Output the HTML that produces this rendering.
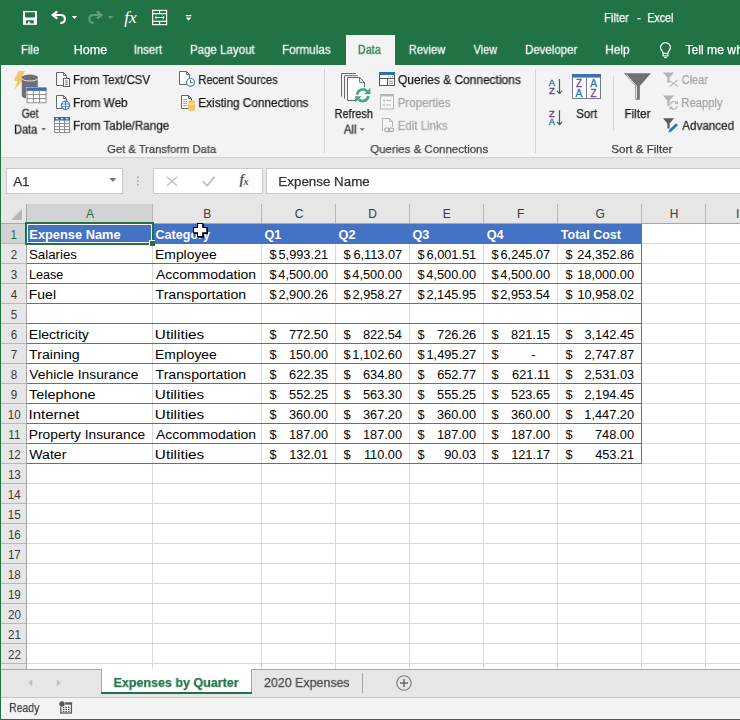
<!DOCTYPE html>
<html lang="en">
<head>
<meta charset="utf-8">
<title>Filter - Excel</title>
<style>
html,body{margin:0;padding:0;}
body{width:740px;height:720px;overflow:hidden;position:relative;background:#fff;font-family:"Liberation Sans",sans-serif;}
#app{position:absolute;left:0;top:0;width:740px;height:720px;overflow:hidden;background:#e6e6e6;}
.abs,.t,#app div,#app svg{position:absolute;}
.t{white-space:pre;display:block;}
.g{will-change:transform;-webkit-text-stroke:0.25px;}
#titlebar{left:0;top:0;width:740px;height:65px;background:#217346;}
#tab-data{left:346px;top:35px;width:49px;height:31px;background:#f3f3f3;}
#ribbon{left:1px;top:65px;width:739px;height:92px;background:#f3f3f3;}
#ribbon-line{left:1px;top:157px;width:739px;height:1px;background:#d2d2d2;}
.vsep{width:1px;background:#d4d4d4;}
.box{background:#fff;border:1px solid #c9c9c9;box-sizing:border-box;}
#sheet{left:1px;top:204px;width:739px;height:465px;background:#fff;}
#colhdr{left:1px;top:204px;width:739px;height:19px;background:#e6e6e6;}
#rowhdr{left:1px;top:204px;width:25px;height:465px;background:#e6e6e6;}
.hl{height:1px;background:#d9d9d9;}
.vl{width:1px;background:#d9d9d9;}
.hh{height:1px;background:#bdbdbd;}
.hv{width:1px;background:#bdbdbd;}
.bl{background:#4472c4;}
#tabbar{left:1px;top:669px;width:739px;height:29px;background:#e6e6e6;}
#statusbar{left:1px;top:698px;width:739px;height:21px;background:#f3f3f3;}
#lborder{left:0;top:0;width:1px;height:720px;background:#217346;}
#bborder{left:0;top:719px;width:740px;height:1px;background:#217346;}
</style>
</head>
<body>
<div id="app">
  <div id="titlebar"></div>
  <div id="tab-data"></div>
  <div id="ribbon"></div>
  <div id="ribbon-line"></div>
  <div class="vsep" style="left:324px;top:69px;height:84px"></div>
  <div class="vsep" style="left:535px;top:69px;height:84px"></div>
  <div class="vsep" style="left:613px;top:76px;height:55px"></div>
  <!-- formula bar -->
  <div class="box" style="left:6px;top:168px;width:117px;height:26px"></div>
  <div class="box" style="left:153px;top:168px;width:110px;height:26px"></div>
  <div class="box" style="left:266px;top:168px;width:480px;height:26px"></div>
  <!-- sheet -->
  <div id="sheet"></div>
  <div id="colhdr"></div>
  <div id="rowhdr"></div>
  <div style="left:27px;top:204px;width:125px;height:19px;background:#d2d2d2;"></div>
<div style="left:1px;top:224px;width:25px;height:19px;background:#d2d2d2;"></div>
<div style="left:27px;top:243px;width:713px;height:1px;background:#d9d9d9;"></div>
<div style="left:1px;top:243px;width:25px;height:1px;background:#b8b8b8;"></div>
<div style="left:27px;top:263px;width:713px;height:1px;background:#d9d9d9;"></div>
<div style="left:1px;top:263px;width:25px;height:1px;background:#b8b8b8;"></div>
<div style="left:27px;top:283px;width:713px;height:1px;background:#d9d9d9;"></div>
<div style="left:1px;top:283px;width:25px;height:1px;background:#b8b8b8;"></div>
<div style="left:27px;top:303px;width:713px;height:1px;background:#d9d9d9;"></div>
<div style="left:1px;top:303px;width:25px;height:1px;background:#b8b8b8;"></div>
<div style="left:27px;top:323px;width:713px;height:1px;background:#d9d9d9;"></div>
<div style="left:1px;top:323px;width:25px;height:1px;background:#b8b8b8;"></div>
<div style="left:27px;top:343px;width:713px;height:1px;background:#d9d9d9;"></div>
<div style="left:1px;top:343px;width:25px;height:1px;background:#b8b8b8;"></div>
<div style="left:27px;top:363px;width:713px;height:1px;background:#d9d9d9;"></div>
<div style="left:1px;top:363px;width:25px;height:1px;background:#b8b8b8;"></div>
<div style="left:27px;top:383px;width:713px;height:1px;background:#d9d9d9;"></div>
<div style="left:1px;top:383px;width:25px;height:1px;background:#b8b8b8;"></div>
<div style="left:27px;top:403px;width:713px;height:1px;background:#d9d9d9;"></div>
<div style="left:1px;top:403px;width:25px;height:1px;background:#b8b8b8;"></div>
<div style="left:27px;top:423px;width:713px;height:1px;background:#d9d9d9;"></div>
<div style="left:1px;top:423px;width:25px;height:1px;background:#b8b8b8;"></div>
<div style="left:27px;top:443px;width:713px;height:1px;background:#d9d9d9;"></div>
<div style="left:1px;top:443px;width:25px;height:1px;background:#b8b8b8;"></div>
<div style="left:27px;top:463px;width:713px;height:1px;background:#d9d9d9;"></div>
<div style="left:1px;top:463px;width:25px;height:1px;background:#b8b8b8;"></div>
<div style="left:27px;top:483px;width:713px;height:1px;background:#d9d9d9;"></div>
<div style="left:1px;top:483px;width:25px;height:1px;background:#b8b8b8;"></div>
<div style="left:27px;top:503px;width:713px;height:1px;background:#d9d9d9;"></div>
<div style="left:1px;top:503px;width:25px;height:1px;background:#b8b8b8;"></div>
<div style="left:27px;top:523px;width:713px;height:1px;background:#d9d9d9;"></div>
<div style="left:1px;top:523px;width:25px;height:1px;background:#b8b8b8;"></div>
<div style="left:27px;top:543px;width:713px;height:1px;background:#d9d9d9;"></div>
<div style="left:1px;top:543px;width:25px;height:1px;background:#b8b8b8;"></div>
<div style="left:27px;top:563px;width:713px;height:1px;background:#d9d9d9;"></div>
<div style="left:1px;top:563px;width:25px;height:1px;background:#b8b8b8;"></div>
<div style="left:27px;top:583px;width:713px;height:1px;background:#d9d9d9;"></div>
<div style="left:1px;top:583px;width:25px;height:1px;background:#b8b8b8;"></div>
<div style="left:27px;top:603px;width:713px;height:1px;background:#d9d9d9;"></div>
<div style="left:1px;top:603px;width:25px;height:1px;background:#b8b8b8;"></div>
<div style="left:27px;top:623px;width:713px;height:1px;background:#d9d9d9;"></div>
<div style="left:1px;top:623px;width:25px;height:1px;background:#b8b8b8;"></div>
<div style="left:27px;top:643px;width:713px;height:1px;background:#d9d9d9;"></div>
<div style="left:1px;top:643px;width:25px;height:1px;background:#b8b8b8;"></div>
<div style="left:27px;top:663px;width:713px;height:1px;background:#d9d9d9;"></div>
<div style="left:1px;top:663px;width:25px;height:1px;background:#b8b8b8;"></div>
<div style="left:152px;top:224px;width:1px;height:445px;background:#d9d9d9;"></div>
<div style="left:152px;top:204px;width:1px;height:19px;background:#b8b8b8;"></div>
<div style="left:261px;top:224px;width:1px;height:445px;background:#d9d9d9;"></div>
<div style="left:261px;top:204px;width:1px;height:19px;background:#b8b8b8;"></div>
<div style="left:335px;top:224px;width:1px;height:445px;background:#d9d9d9;"></div>
<div style="left:335px;top:204px;width:1px;height:19px;background:#b8b8b8;"></div>
<div style="left:409px;top:224px;width:1px;height:445px;background:#d9d9d9;"></div>
<div style="left:409px;top:204px;width:1px;height:19px;background:#b8b8b8;"></div>
<div style="left:483px;top:224px;width:1px;height:445px;background:#d9d9d9;"></div>
<div style="left:483px;top:204px;width:1px;height:19px;background:#b8b8b8;"></div>
<div style="left:557px;top:224px;width:1px;height:445px;background:#d9d9d9;"></div>
<div style="left:557px;top:204px;width:1px;height:19px;background:#b8b8b8;"></div>
<div style="left:641px;top:224px;width:1px;height:445px;background:#d9d9d9;"></div>
<div style="left:641px;top:204px;width:1px;height:19px;background:#b8b8b8;"></div>
<div style="left:705px;top:224px;width:1px;height:445px;background:#d9d9d9;"></div>
<div style="left:705px;top:204px;width:1px;height:19px;background:#b8b8b8;"></div>
<div style="left:1px;top:223px;width:739px;height:1px;background:#a6a6a6;"></div>
<div style="left:26px;top:204px;width:1px;height:465px;background:#a6a6a6;"></div>
<div style="left:27px;top:224px;width:615px;height:20px;background:#4472c4;"></div>
<div style="left:27px;top:263px;width:615px;height:1px;background:#4472c4;"></div>
<div style="left:27px;top:283px;width:615px;height:1px;background:#4472c4;"></div>
<div style="left:27px;top:303px;width:615px;height:1px;background:#4472c4;"></div>
<div style="left:27px;top:323px;width:615px;height:1px;background:#4472c4;"></div>
<div style="left:27px;top:343px;width:615px;height:1px;background:#4472c4;"></div>
<div style="left:27px;top:363px;width:615px;height:1px;background:#4472c4;"></div>
<div style="left:27px;top:383px;width:615px;height:1px;background:#4472c4;"></div>
<div style="left:27px;top:403px;width:615px;height:1px;background:#4472c4;"></div>
<div style="left:27px;top:423px;width:615px;height:1px;background:#4472c4;"></div>
<div style="left:27px;top:443px;width:615px;height:1px;background:#4472c4;"></div>
<div style="left:27px;top:463px;width:615px;height:1px;background:#4472c4;"></div>
<div style="left:641px;top:224px;width:1px;height:240px;background:#4472c4;"></div>
<div style="left:25px;top:222px;width:129px;height:23px;background:transparent;border:2px solid #217346;box-sizing:border-box;"></div>
<div style="left:27px;top:224px;width:125px;height:19px;background:transparent;border:1px solid #fff;box-sizing:border-box;"></div>
<div style="left:149px;top:240px;width:6px;height:6px;background:#fff;"></div>
<div style="left:150px;top:241px;width:5px;height:5px;background:#217346;"></div>
<svg style="left:10px;top:208px" width="13" height="13" viewBox="0 0 13 13"><path d="M12 1V12H1Z" fill="#b7b7b7"/></svg>

  <div id="tabbar"></div>
  <div id="statusbar"></div>
  
<div style="left:1px;top:669px;width:739px;height:1px;background:#a6a6a6;"></div>
<div style="left:101px;top:669px;width:151px;height:24px;background:#ffffff;border-left:1px solid #a6a6a6;border-right:1px solid #a6a6a6;box-sizing:border-box;"></div>
<div style="left:101px;top:692px;width:151px;height:2px;background:#217346;"></div>
<div style="left:362px;top:673px;width:1px;height:20px;background:#a6a6a6;"></div>
<div style="left:1px;top:697px;width:739px;height:1px;background:#c6c6c6;"></div>
  <svg style="left:0;top:0" width="740" height="720" viewBox="0 0 740 720" font-family="Liberation Sans, sans-serif">
<!-- ===== QAT ===== -->
<rect x="23" y="11" width="14" height="13.8" fill="#fff"/>
<path d="M25 12.3H35V16.4L34 17.5H26L25 16.4Z" fill="#217346"/>
<path d="M26 20.2H33.7V23.5H30.2V21.7H28V23.5H26Z" fill="#217346"/>
<g fill="none" stroke="#fff">
  <path d="M57.2 11.3L52.8 15L57.2 18.7" stroke-width="2.4"/>
  <path d="M53.6 15H60.4C63.6 15 64.9 17 64.9 19C64.9 21.4 63 22.9 60.4 22.9" stroke-width="2.1"/>
</g>
<path d="M71.9 16.1H77.1L74.5 19Z" fill="#fff"/>
<g fill="none" stroke="#5f9f80">
  <path d="M97 11.3L101.4 15L97 18.7" stroke-width="2.4"/>
  <path d="M100.6 15H93.8C90.6 15 89.3 17 89.3 19C89.3 21.4 91.2 22.9 93.8 22.9" stroke-width="2.1"/>
</g>
<path d="M107.9 16.1H113.1L110.5 19Z" fill="#5f9f80"/>
<text x="124.2" y="23" font-family="Liberation Serif, serif" font-style="italic" font-size="17" fill="#fff" textLength="12.5" lengthAdjust="spacingAndGlyphs">fx</text>
<g fill="none" stroke="#fff" stroke-width="1.2">
  <rect x="152.6" y="10.4" width="14" height="14.2"/>
  <path d="M152.6 13.6H166.6M152.6 21.4H166.6M159.6 10.4V13.6M159.6 21.4V24.6"/>
  <path d="M155 17.5H164.2M156.6 16L155 17.5L156.6 19M162.6 16L164.2 17.5L162.6 19" stroke-width="1"/>
</g>
<path d="M185.8 15H191.4V16.2H185.8ZM185.8 17.6H191.4L188.6 20.8Z" fill="#fff"/>
<!-- lightbulb -->
<g fill="none" stroke="#fff" stroke-width="1.3">
  <path d="M663.1 53.4C663.1 51 660.5 50.2 660.5 47.6A4.95 4.95 0 1 1 670.4 47.6C670.4 50.2 667.9 51 667.9 53.4"/>
  <rect x="663.1" y="53.4" width="4.8" height="2.5" stroke-width="1.1"/>
  <path d="M664.2 57.6H666.9" stroke-width="1.1"/>
</g>

<!-- ===== Get Data ===== -->
<path d="M18.4 71H25L21.6 78.4L24 79.2L14 90L17.8 81.6L14 80.4Z" fill="#f2c565"/>
<path d="M21.8 77.3V96A8 2.7 0 0 0 37.8 96V77.3Z" fill="#707074"/>
<ellipse cx="29.8" cy="77.3" rx="8" ry="2.7" fill="#707074"/>
<path d="M21.8 78.3A8 2.7 0 0 0 37.8 78.3" fill="none" stroke="#f3f3f3" stroke-width="0.9"/>
<rect x="26" y="87" width="20.8" height="16.6" fill="#fdfdfd"/>
<rect x="27" y="88" width="19" height="14.8" fill="#fff" stroke="#8a8a8a" stroke-width="1"/>
<rect x="26.5" y="87.6" width="19.9" height="3.3" fill="#3d6fb6"/>
<path d="M33.4 91V102.8M39.6 91V102.8M27 94.6H46M27 98.6H46" stroke="#8a8a8a" stroke-width="1" fill="none"/>
<path d="M41.3 128H46L43.65 130.6Z" fill="#707070"/>
<!-- From Text/CSV -->
<g fill="#fdfdfd" stroke="#666" stroke-width="1">
  <path d="M56.5 72.5H63.5L66.5 75.5V85.5H56.5Z"/>
  <path d="M63.5 72.5V75.5H66.5" fill="none"/>
  <rect x="63.5" y="78.5" width="6" height="8"/>
  <path d="M65 81H68M65 82.8H68M65 84.6H68" stroke-width="0.8"/>
</g>
<!-- From Web -->
<g fill="#fdfdfd" stroke="#666" stroke-width="1">
  <path d="M56.5 95.5H63.5L66.5 98.5V108.5H56.5Z"/>
  <path d="M63.5 95.5V98.5H66.5" fill="none"/>
</g>
<circle cx="65.5" cy="105.3" r="4.1" fill="#fff" stroke="#3b7dd8" stroke-width="1.3"/>
<path d="M61.6 104H69.4M61.6 106.6H69.4M65.5 101.4V109.2" stroke="#3b7dd8" stroke-width="0.9" fill="none"/>
<!-- From Table/Range -->
<rect x="54.5" y="117.5" width="15" height="15" fill="#fff" stroke="#8a8a8a"/>
<rect x="54" y="117" width="16" height="3.6" fill="#3d6fb6"/>
<path d="M56 118.8H58M61 118.8H63M66 118.8H68" stroke="#fff" stroke-width="1"/>
<path d="M59.5 120.6V132.5M64.5 120.6V132.5M54.5 123.6H69.5M54.5 126.6H69.5M54.5 129.6H69.5" stroke="#8a8a8a" stroke-width="1" fill="none"/>
<!-- Recent Sources -->
<g fill="#fdfdfd" stroke="#666" stroke-width="1">
  <path d="M179.5 71.5H186.5L189.5 74.5V84.5H179.5Z"/>
  <path d="M186.5 71.5V74.5H189.5" fill="none"/>
</g>
<circle cx="190.5" cy="82.4" r="3.9" fill="#fff" stroke="#3b7dd8" stroke-width="1.2"/>
<path d="M190.5 80V82.6H192.6" stroke="#444" stroke-width="0.9" fill="none"/>
<!-- Existing Connections -->
<g fill="#fdfdfd" stroke="#666" stroke-width="1">
  <path d="M181.5 95.5H188.5L191.5 98.5V108.5H181.5Z"/>
  <path d="M188.5 95.5V98.5H191.5" fill="none"/>
  <path d="M183.2 99.6H187M183.2 101.6H187M183.2 103.6H187M183.2 105.6H187" stroke-width="0.8" stroke="#888"/>
</g>
<path d="M188 101.8V109.4A3.6 1.4 0 0 0 195.2 109.4V101.8Z" fill="#f2c565"/>
<ellipse cx="191.6" cy="101.8" rx="3.6" ry="1.4" fill="#f2c565"/>
<path d="M188 102.9A3.6 1.4 0 0 0 195.2 102.9" fill="none" stroke="#fdf6e4" stroke-width="0.8"/>

<!-- ===== Refresh All ===== -->
<g fill="none" stroke="#6a6a72" stroke-width="1">
  <path d="M341.5 96.5V73.5H356"/>
  <path d="M344.5 98.8V75.7H357.8"/>
  <path d="M347.5 77.5H359.6L364.5 82.4V100.5H347.5Z" fill="#fdfdfd"/>
  <path d="M359.6 77.5V82.4H364.5"/>
</g>
<circle cx="362.8" cy="95.2" r="8.2" fill="#fdfdfd"/>
<g fill="none" stroke="#4aa583" stroke-width="2.8">
  <path d="M357.3 94.6A5.6 5.6 0 0 1 367 91.2"/>
  <path d="M368.3 95.8A5.6 5.6 0 0 1 358.6 99.2"/>
</g>
<path d="M370.4 87.8V94.2H364Z" fill="#4aa583"/>
<path d="M355.2 102.6V96.2H361.6Z" fill="#4aa583"/>
<path d="M359.6 128.2H364.6L362.1 130.8Z" fill="#666"/>
<!-- Queries & Connections icon -->
<rect x="379.5" y="72.5" width="15" height="13" fill="#fdfdfd" stroke="#555"/>
<rect x="379" y="72" width="16" height="3" fill="#2e6db4"/>
<path d="M379.5 78.5H394.5M387.5 78.5V85.5" stroke="#555" fill="none"/>
<path d="M389 81.2H393M389 83.2H393" stroke="#777" stroke-width="0.8"/>
<path d="M388 76.8H389M390 76.8H391M392 76.8H393" stroke="#777" stroke-width="0.8"/>
<!-- Properties icon (disabled) -->
<rect x="380.5" y="94.5" width="13" height="14.5" fill="#f7f7f7" stroke="#b4b4b4"/>
<rect x="380" y="94" width="14" height="2.4" fill="#b4b4b4"/>
<circle cx="384" cy="100.4" r="1" fill="#b4b4b4"/>
<circle cx="384" cy="105" r="1" fill="none" stroke="#b4b4b4" stroke-width="0.7"/>
<path d="M386.4 100.4H391M386.4 105H391" stroke="#b4b4b4" stroke-width="1"/>
<!-- Edit Links icon (disabled) -->
<g fill="#f7f7f7" stroke="#b4b4b4" stroke-width="1">
  <path d="M382.5 131V118.5H389.5L392.5 121.5V127"/>
  <path d="M389.5 118.5V121.5H392.5" fill="none"/>
</g>
<g fill="none" stroke="#a8a8a8" stroke-width="1.2">
  <rect x="384.6" y="128" width="5" height="3.6" rx="1.8"/>
  <rect x="388.6" y="128" width="5" height="3.6" rx="1.8"/>
</g>

<!-- ===== Sort & Filter ===== -->
<g font-size="9.8" font-weight="400" stroke-width="0.4">
  <text x="548.8" y="86.2" fill="#2e75b6" stroke="#2e75b6" textLength="6.2" lengthAdjust="spacingAndGlyphs">A</text>
  <text x="549" y="93.8" fill="#7b3f9e" stroke="#7b3f9e" textLength="5.8" lengthAdjust="spacingAndGlyphs">Z</text>
  <text x="549" y="116.9" fill="#7b3f9e" stroke="#7b3f9e" textLength="5.8" lengthAdjust="spacingAndGlyphs">Z</text>
  <text x="548.8" y="124.9" fill="#2e75b6" stroke="#2e75b6" textLength="6.2" lengthAdjust="spacingAndGlyphs">A</text>
</g>
<g fill="none" stroke="#555" stroke-width="1.2">
  <path d="M559.5 79V93.4M557 90.8L559.5 93.4L562 90.8"/>
  <path d="M559.5 110.2V124.6M557 122L559.5 124.6L562 122"/>
</g>
<rect x="572.5" y="74.5" width="28" height="24" fill="#fdfdfd" stroke="#7a7a8c"/>
<rect x="572" y="74" width="29" height="3.6" fill="#3d6fb6"/>
<path d="M586.5 77.6V98.5" stroke="#7a7a8c" fill="none"/>
<g font-size="10.4" font-weight="400" stroke-width="0.35">
  <text x="576" y="86.6" fill="#7b3f9e" stroke="#7b3f9e" textLength="6" lengthAdjust="spacingAndGlyphs">Z</text>
  <text x="575.6" y="97" fill="#2e75b6" stroke="#2e75b6" textLength="6.8" lengthAdjust="spacingAndGlyphs">A</text>
  <text x="590.2" y="86.6" fill="#2e75b6" stroke="#2e75b6" textLength="6.8" lengthAdjust="spacingAndGlyphs">A</text>
  <text x="590.6" y="97" fill="#7b3f9e" stroke="#7b3f9e" textLength="6" lengthAdjust="spacingAndGlyphs">Z</text>
</g>
<!-- Filter funnel -->
<path d="M624 73.2H651L639.8 86V99.8H635.4V86Z" fill="#707074"/>
<path d="M626.4 74.6L636.6 86.2V98.8" stroke="#fdfdfd" stroke-width="0.9" fill="none"/>
<!-- Clear -->
<path d="M663 72.4H674L669.6 77.6V82.8H667.4V77.6Z" fill="#b4b4b4"/>
<path d="M669.4 80.6L677.8 86.4M677.4 80.2L669.8 86.6" stroke="#b4b4b4" stroke-width="1.1" fill="none"/>
<!-- Reapply -->
<path d="M663 95.4H674L669.6 100.6V105.8H667.4V100.6Z" fill="#b4b4b4"/>
<g fill="none" stroke="#b4b4b4" stroke-width="1.2">
  <path d="M670.4 104.6A3.5 3.5 0 0 1 676.4 102.6"/>
  <path d="M677.2 106A3.5 3.5 0 0 1 671.2 108"/>
</g>
<path d="M678 100.6V104H674.6Z" fill="#b4b4b4"/>
<path d="M669.6 110V106.6H673Z" fill="#b4b4b4"/>
<!-- Advanced -->
<path d="M663 118.2H674L669.6 123.4V128.6H667.4V123.4Z" fill="#5a5a5a"/>
<path d="M668.4 132.4L669.4 129.4L676 123.2L678 125.2L671.4 131.4Z" fill="#2e75b6"/>

<!-- ===== Formula bar ===== -->
<path d="M109.4 178H116.4L112.9 182Z" fill="#777"/>
<g fill="#a6a6a6">
  <rect x="137" y="176.5" width="1.6" height="1.6"/><rect x="137" y="180.2" width="1.6" height="1.6"/><rect x="137" y="183.9" width="1.6" height="1.6"/>
</g>
<path d="M167 177L177 185.8M177 177L167 185.8" stroke="#c2c2c2" stroke-width="1.5" fill="none"/>
<path d="M202.8 181.4L207.2 185.6L214.4 176.8" stroke="#c2c2c2" stroke-width="2" fill="none"/>
<text x="239.4" y="184" font-family="Liberation Serif, serif" font-style="italic" font-weight="700" fill="#5a5a5a"><tspan font-size="14">f</tspan><tspan font-size="10.5" dx="-0.6" dy="0.6">x</tspan></text>

<!-- ===== sheet tab bar ===== -->
<path d="M32.4 679.2V686.4L28.4 682.8Z" fill="#c2c2c2"/>
<path d="M56.8 679.2V686.4L60.8 682.8Z" fill="#c2c2c2"/>
<circle cx="404" cy="683" r="7.2" fill="none" stroke="#7a7a7a" stroke-width="1.1"/>
<path d="M400 683H408M404 679V687" stroke="#6a6a6a" stroke-width="1.5" fill="none"/>
<!-- macro icon -->
<rect x="60.8" y="703.2" width="10.6" height="9.8" fill="#f8f8f8" stroke="#5a5a5a" stroke-width="1.3"/>
<rect x="65" y="702.5" width="7.1" height="2.2" fill="#5a5a5a"/>
<path d="M62.8 707.4H69.6M62.8 709.4H69.6M62.8 711.4H69.6" stroke="#5a5a5a" stroke-width="1.1" stroke-dasharray="1.6 1"/>
<circle cx="62" cy="704" r="3.3" fill="#f3f3f3"/>
<circle cx="62" cy="704" r="2.7" fill="#5a5a5a"/>
</svg>

<span class="t g" style='left:603px;top:9px;font-size:12.5px;line-height:18px;color:#ffffff;transform:translate(0.90px,0.00px) scaleX(0.9023);transform-origin:0 0;'>Filter</span>
<span class="t g" style='left:637px;top:9px;font-size:12.5px;line-height:18px;color:#ffffff;transform:translate(0.10px,0.00px) scaleX(0.9032);transform-origin:0 0;'>-</span>
<span class="t g" style='left:647px;top:9px;font-size:12.5px;line-height:18px;color:#ffffff;transform:translate(0.34px,0.00px) scaleX(0.8557);transform-origin:0 0;'>Excel</span>
<span class="t g" style='left:20px;top:41px;font-size:12px;line-height:17px;color:#ffffff;transform:translate(0.90px,0.80px) scaleX(0.9524);transform-origin:0 0;'>File</span>
<span class="t g" style='left:73px;top:41px;font-size:12px;line-height:17px;color:#ffffff;transform:translate(0.71px,0.80px) scaleX(1.0442);transform-origin:0 0;'>Home</span>
<span class="t g" style='left:133px;top:41px;font-size:12px;line-height:17px;color:#ffffff;transform:translate(0.66px,0.80px) scaleX(0.9497);transform-origin:0 0;'>Insert</span>
<span class="t g" style='left:189px;top:41px;font-size:12px;line-height:17px;color:#ffffff;transform:translate(0.99px,0.80px) scaleX(0.9601);transform-origin:0 0;'>Page Layout</span>
<span class="t g" style='left:282px;top:41px;font-size:12px;line-height:17px;color:#ffffff;transform:translate(0.08px,0.80px) scaleX(0.9723);transform-origin:0 0;'>Formulas</span>
<span class="t g" style='left:357px;top:41px;font-size:12px;line-height:17px;color:#217346;transform:translate(0.84px,0.80px) scaleX(0.9039);transform-origin:0 0;'>Data</span>
<span class="t g" style='left:408px;top:41px;font-size:12px;line-height:17px;color:#ffffff;transform:translate(0.82px,0.80px) scaleX(0.9259);transform-origin:0 0;'>Review</span>
<span class="t g" style='left:473px;top:41px;font-size:12px;line-height:17px;color:#ffffff;transform:translate(0.65px,0.80px) scaleX(0.9070);transform-origin:0 0;'>View</span>
<span class="t g" style='left:525px;top:41px;font-size:12px;line-height:17px;color:#ffffff;transform:translate(0.09px,0.80px) scaleX(0.9542);transform-origin:0 0;'>Developer</span>
<span class="t g" style='left:605px;top:41px;font-size:12px;line-height:17px;color:#ffffff;transform:translate(0.26px,0.80px) scaleX(0.9849);transform-origin:0 0;'>Help</span>
<span class="t g" style='left:685px;top:41px;font-size:12px;line-height:17px;color:#ffffff;transform:translate(0.45px,0.80px) scaleX(1.0140);transform-origin:0 0;'>Tell me what you want</span>
<span class="t g" style='left:21px;top:105px;font-size:12px;line-height:17px;color:#1a1a1a;transform:translate(0.68px,0.70px) scaleX(0.8686);transform-origin:0 0;'>Get</span>
<span class="t g" style='left:14px;top:121px;font-size:12px;line-height:17px;color:#1a1a1a;transform:translate(0.14px,0.60px) scaleX(0.9039);transform-origin:0 0;'>Data</span>
<span class="t g" style='left:73px;top:72px;font-size:12px;line-height:17px;color:#1a1a1a;transform:translate(0.10px,0.00px) scaleX(0.9470);transform-origin:0 0;'>From Text/CSV</span>
<span class="t g" style='left:73px;top:95px;font-size:12px;line-height:17px;color:#1a1a1a;transform:translate(0.07px,0.00px) scaleX(0.9788);transform-origin:0 0;'>From Web</span>
<span class="t g" style='left:73px;top:117px;font-size:12px;line-height:17px;color:#1a1a1a;transform:translate(0.07px,0.80px) scaleX(0.9768);transform-origin:0 0;'>From Table/Range</span>
<span class="t g" style='left:198px;top:72px;font-size:12px;line-height:17px;color:#1a1a1a;transform:translate(0.32px,0.00px) scaleX(0.9292);transform-origin:0 0;'>Recent Sources</span>
<span class="t g" style='left:198px;top:95px;font-size:12px;line-height:17px;color:#1a1a1a;transform:translate(0.27px,0.00px) scaleX(0.9828);transform-origin:0 0;'>Existing Connections</span>
<span class="t g" style='left:107px;top:141px;font-size:11.5px;line-height:16px;color:#444444;transform:translate(0.16px,0.00px) scaleX(0.9748);transform-origin:0 0;'>Get &amp; Transform Data</span>
<span class="t g" style='left:334px;top:106px;font-size:12px;line-height:17px;color:#1a1a1a;transform:translate(0.53px,0.00px) scaleX(0.9156);transform-origin:0 0;'>Refresh</span>
<span class="t g" style='left:343px;top:121px;font-size:12px;line-height:17px;color:#1a1a1a;transform:translate(0.80px,0.60px) scaleX(0.9562);transform-origin:0 0;'>All</span>
<span class="t g" style='left:398px;top:72px;font-size:12px;line-height:17px;color:#1a1a1a;transform:translate(0.05px,0.00px) scaleX(0.9947);transform-origin:0 0;'>Queries &amp; Connections</span>
<span class="t g" style='left:397px;top:95px;font-size:12px;line-height:17px;color:#a6a6a6;transform:translate(0.68px,0.00px) scaleX(0.9634);transform-origin:0 0;'>Properties</span>
<span class="t g" style='left:397px;top:117px;font-size:12px;line-height:17px;color:#a6a6a6;transform:translate(0.69px,0.80px) scaleX(0.9586);transform-origin:0 0;'>Edit Links</span>
<span class="t g" style='left:370px;top:141px;font-size:11.5px;line-height:16px;color:#444444;transform:translate(0.30px,0.00px) scaleX(0.9970);transform-origin:0 0;'>Queries &amp; Connections</span>
<span class="t g" style='left:576px;top:106px;font-size:12px;line-height:17px;color:#1a1a1a;transform:translate(0.22px,0.00px) scaleX(0.9533);transform-origin:0 0;'>Sort</span>
<span class="t g" style='left:624px;top:106px;font-size:12px;line-height:17px;color:#1a1a1a;transform:translate(0.48px,0.00px) scaleX(0.9725);transform-origin:0 0;'>Filter</span>
<span class="t g" style='left:681px;top:72px;font-size:12px;line-height:17px;color:#a6a6a6;transform:translate(0.65px,0.00px) scaleX(0.9176);transform-origin:0 0;'>Clear</span>
<span class="t g" style='left:681px;top:95px;font-size:12px;line-height:17px;color:#a6a6a6;transform:translate(0.31px,0.00px) scaleX(0.9374);transform-origin:0 0;'>Reapply</span>
<span class="t g" style='left:682px;top:117px;font-size:12px;line-height:17px;color:#1a1a1a;transform:translate(0.20px,0.80px) scaleX(0.9715);transform-origin:0 0;'>Advanced</span>
<span class="t g" style='left:611px;top:141px;font-size:11.5px;line-height:16px;color:#444444;transform:translate(0.30px,0.00px) scaleX(1.0075);transform-origin:0 0;'>Sort &amp; Filter</span>
<span class="t g" style='left:13px;top:173px;font-size:12.5px;line-height:18px;color:#333333;transform:translate(0.20px,0.00px) scaleX(1.0680);transform-origin:0 0;'>A1</span>
<span class="t g" style='left:278px;top:173px;font-size:12.5px;line-height:18px;color:#333333;transform:translate(0.33px,0.00px) scaleX(1.0703);transform-origin:0 0;'>Expense Name</span>
<span class="t g" style='left:113px;top:672px;font-size:13.5px;line-height:19px;color:#217346;transform:translate(0.57px,0.90px) scaleX(0.9265);transform-origin:0 0;font-weight:700;'>Expenses by Quarter</span>
<span class="t g" style='left:264px;top:673px;font-size:13px;line-height:18px;color:#444444;transform:translate(0.08px,0.90px) scaleX(0.9537);transform-origin:0 0;'>2020 Expenses</span>
<span class="t g" style='left:9px;top:700px;font-size:12px;line-height:17px;color:#444444;transform:translate(0.18px,0.00px) scaleX(0.8681);transform-origin:0 0;'>Ready</span>
<span class="t" style='left:85px;top:205px;font-size:12px;line-height:17px;color:#217346;transform:translate(0.90px,0.80px) scaleX(1.0000);transform-origin:0 0;'>A</span>
<span class="t" style='left:203px;top:205px;font-size:12px;line-height:17px;color:#3a3a3a;transform:translate(0.22px,0.80px) scaleX(1.0000);transform-origin:0 0;'>B</span>
<span class="t" style='left:294px;top:205px;font-size:12px;line-height:17px;color:#3a3a3a;transform:translate(0.77px,0.80px) scaleX(1.0000);transform-origin:0 0;'>C</span>
<span class="t" style='left:368px;top:205px;font-size:12px;line-height:17px;color:#3a3a3a;transform:translate(0.28px,0.80px) scaleX(1.0000);transform-origin:0 0;'>D</span>
<span class="t" style='left:442px;top:205px;font-size:12px;line-height:17px;color:#3a3a3a;transform:translate(0.67px,0.80px) scaleX(1.0000);transform-origin:0 0;'>E</span>
<span class="t" style='left:517px;top:205px;font-size:12px;line-height:17px;color:#3a3a3a;transform:translate(0.10px,0.80px) scaleX(1.0000);transform-origin:0 0;'>F</span>
<span class="t" style='left:595px;top:205px;font-size:12px;line-height:17px;color:#3a3a3a;transform:translate(0.48px,0.80px) scaleX(1.0000);transform-origin:0 0;'>G</span>
<span class="t" style='left:669px;top:205px;font-size:12px;line-height:17px;color:#3a3a3a;transform:translate(0.67px,0.80px) scaleX(1.0000);transform-origin:0 0;'>H</span>
<span class="t" style='left:736px;top:205px;font-size:12px;line-height:17px;color:#3a3a3a;transform:translate(0.12px,0.80px) scaleX(1.0000);transform-origin:0 0;'>I</span>
<span class="t" style='left:10px;top:227px;font-size:12px;line-height:17px;color:#217346;transform:translate(0.62px,0.00px) scaleX(0.9670);transform-origin:0 0;'>1</span>
<span class="t" style='left:10px;top:247px;font-size:12px;line-height:17px;color:#3a3a3a;transform:translate(0.76px,0.00px) scaleX(0.9670);transform-origin:0 0;'>2</span>
<span class="t" style='left:10px;top:267px;font-size:12px;line-height:17px;color:#3a3a3a;transform:translate(0.81px,0.00px) scaleX(0.9670);transform-origin:0 0;'>3</span>
<span class="t" style='left:10px;top:287px;font-size:12px;line-height:17px;color:#3a3a3a;transform:translate(0.81px,0.00px) scaleX(0.9670);transform-origin:0 0;'>4</span>
<span class="t" style='left:10px;top:307px;font-size:12px;line-height:17px;color:#3a3a3a;transform:translate(0.78px,0.00px) scaleX(0.9670);transform-origin:0 0;'>5</span>
<span class="t" style='left:10px;top:327px;font-size:12px;line-height:17px;color:#3a3a3a;transform:translate(0.74px,0.00px) scaleX(0.9670);transform-origin:0 0;'>6</span>
<span class="t" style='left:10px;top:347px;font-size:12px;line-height:17px;color:#3a3a3a;transform:translate(0.76px,0.00px) scaleX(0.9670);transform-origin:0 0;'>7</span>
<span class="t" style='left:10px;top:367px;font-size:12px;line-height:17px;color:#3a3a3a;transform:translate(0.76px,0.00px) scaleX(0.9670);transform-origin:0 0;'>8</span>
<span class="t" style='left:10px;top:387px;font-size:12px;line-height:17px;color:#3a3a3a;transform:translate(0.76px,0.00px) scaleX(0.9670);transform-origin:0 0;'>9</span>
<span class="t" style='left:7px;top:407px;font-size:12px;line-height:17px;color:#3a3a3a;transform:translate(0.83px,0.00px) scaleX(0.9670);transform-origin:0 0;'>10</span>
<span class="t" style='left:8px;top:427px;font-size:12px;line-height:17px;color:#3a3a3a;transform:translate(0.31px,0.00px) scaleX(0.9670);transform-origin:0 0;'>11</span>
<span class="t" style='left:7px;top:447px;font-size:12px;line-height:17px;color:#3a3a3a;transform:translate(0.90px,0.00px) scaleX(0.9670);transform-origin:0 0;'>12</span>
<span class="t" style='left:7px;top:467px;font-size:12px;line-height:17px;color:#3a3a3a;transform:translate(0.88px,0.00px) scaleX(0.9670);transform-origin:0 0;'>13</span>
<span class="t" style='left:7px;top:487px;font-size:12px;line-height:17px;color:#3a3a3a;transform:translate(0.78px,0.00px) scaleX(0.9670);transform-origin:0 0;'>14</span>
<span class="t" style='left:7px;top:507px;font-size:12px;line-height:17px;color:#3a3a3a;transform:translate(0.85px,0.00px) scaleX(0.9670);transform-origin:0 0;'>15</span>
<span class="t" style='left:7px;top:527px;font-size:12px;line-height:17px;color:#3a3a3a;transform:translate(0.88px,0.00px) scaleX(0.9670);transform-origin:0 0;'>16</span>
<span class="t" style='left:7px;top:547px;font-size:12px;line-height:17px;color:#3a3a3a;transform:translate(0.90px,0.00px) scaleX(0.9670);transform-origin:0 0;'>17</span>
<span class="t" style='left:7px;top:567px;font-size:12px;line-height:17px;color:#3a3a3a;transform:translate(0.85px,0.00px) scaleX(0.9670);transform-origin:0 0;'>18</span>
<span class="t" style='left:7px;top:587px;font-size:12px;line-height:17px;color:#3a3a3a;transform:translate(0.88px,0.00px) scaleX(0.9670);transform-origin:0 0;'>19</span>
<span class="t" style='left:7px;top:607px;font-size:12px;line-height:17px;color:#3a3a3a;transform:translate(0.97px,0.00px) scaleX(0.9670);transform-origin:0 0;'>20</span>
<span class="t" style='left:8px;top:627px;font-size:12px;line-height:17px;color:#3a3a3a;transform:translate(0.05px,0.00px) scaleX(0.9670);transform-origin:0 0;'>21</span>
<span class="t" style='left:8px;top:647px;font-size:12px;line-height:17px;color:#3a3a3a;transform:translate(0.05px,0.00px) scaleX(0.9670);transform-origin:0 0;'>22</span>
<span class="t" style='left:29px;top:227px;font-size:12.2px;line-height:17px;color:#ffffff;transform:translate(0.36px,0.00px) scaleX(1.0514);transform-origin:0 0;font-weight:700;'>Expense Name</span>
<span class="t" style='left:155px;top:227px;font-size:12.2px;line-height:17px;color:#ffffff;transform:translate(0.48px,0.00px) scaleX(1.0315);transform-origin:0 0;font-weight:700;'>Category</span>
<span class="t" style='left:264px;top:227px;font-size:12.2px;line-height:17px;color:#ffffff;transform:translate(0.48px,0.00px) scaleX(1.0356);transform-origin:0 0;font-weight:700;'>Q1</span>
<span class="t" style='left:338px;top:227px;font-size:12.2px;line-height:17px;color:#ffffff;transform:translate(0.48px,0.00px) scaleX(1.0458);transform-origin:0 0;font-weight:700;'>Q2</span>
<span class="t" style='left:412px;top:227px;font-size:12.2px;line-height:17px;color:#ffffff;transform:translate(0.48px,0.00px) scaleX(1.0423);transform-origin:0 0;font-weight:700;'>Q3</span>
<span class="t" style='left:486px;top:227px;font-size:12.2px;line-height:17px;color:#ffffff;transform:translate(0.68px,0.00px) scaleX(1.0413);transform-origin:0 0;font-weight:700;'>Q4</span>
<span class="t" style='left:560px;top:227px;font-size:12.2px;line-height:17px;color:#ffffff;transform:translate(0.80px,0.00px) scaleX(1.0256);transform-origin:0 0;font-weight:700;'>Total Cost</span>
<span class="t" style='left:29px;top:246px;font-size:12.5px;line-height:18px;color:#000000;transform:translate(0.02px,0.00px) scaleX(1.0600);transform-origin:0 0;'>Salaries</span>
<span class="t" style='left:28px;top:266px;font-size:12.5px;line-height:18px;color:#000000;transform:translate(0.89px,0.00px) scaleX(1.0092);transform-origin:0 0;'>Lease</span>
<span class="t" style='left:28px;top:286px;font-size:12.5px;line-height:18px;color:#000000;transform:translate(0.78px,0.00px) scaleX(1.1200);transform-origin:0 0;'>Fuel</span>
<span class="t" style='left:28px;top:326px;font-size:12.5px;line-height:18px;color:#000000;transform:translate(0.78px,0.00px) scaleX(1.1238);transform-origin:0 0;'>Electricity</span>
<span class="t" style='left:29px;top:346px;font-size:12.5px;line-height:18px;color:#000000;transform:translate(0.12px,0.00px) scaleX(1.1294);transform-origin:0 0;'>Training</span>
<span class="t" style='left:29px;top:366px;font-size:12.5px;line-height:18px;color:#000000;transform:translate(0.34px,0.00px) scaleX(1.1056);transform-origin:0 0;'>Vehicle Insurance</span>
<span class="t" style='left:29px;top:386px;font-size:12.5px;line-height:18px;color:#000000;transform:translate(0.11px,0.00px) scaleX(1.1511);transform-origin:0 0;'>Telephone</span>
<span class="t" style='left:28px;top:406px;font-size:12.5px;line-height:18px;color:#000000;transform:translate(0.52px,0.00px) scaleX(1.2029);transform-origin:0 0;'>Internet</span>
<span class="t" style='left:28px;top:426px;font-size:12.5px;line-height:18px;color:#000000;transform:translate(0.80px,0.00px) scaleX(1.1024);transform-origin:0 0;'>Property Insurance</span>
<span class="t" style='left:29px;top:446px;font-size:12.5px;line-height:18px;color:#000000;transform:translate(0.34px,0.00px) scaleX(1.1271);transform-origin:0 0;'>Water</span>
<span class="t" style='left:155px;top:246px;font-size:12.5px;line-height:18px;color:#000000;transform:translate(0.09px,0.00px) scaleX(1.1101);transform-origin:0 0;'>Employee</span>
<span class="t" style='left:155px;top:266px;font-size:12.5px;line-height:18px;color:#000000;transform:translate(0.90px,0.00px) scaleX(1.1171);transform-origin:0 0;'>Accommodation</span>
<span class="t" style='left:155px;top:286px;font-size:12.5px;line-height:18px;color:#000000;transform:translate(0.52px,0.00px) scaleX(1.1315);transform-origin:0 0;'>Transportation</span>
<span class="t" style='left:154px;top:326px;font-size:12.5px;line-height:18px;color:#000000;transform:translate(0.84px,0.00px) scaleX(1.2262);transform-origin:0 0;'>Utilities</span>
<span class="t" style='left:155px;top:346px;font-size:12.5px;line-height:18px;color:#000000;transform:translate(0.09px,0.00px) scaleX(1.1101);transform-origin:0 0;'>Employee</span>
<span class="t" style='left:155px;top:366px;font-size:12.5px;line-height:18px;color:#000000;transform:translate(0.52px,0.00px) scaleX(1.1315);transform-origin:0 0;'>Transportation</span>
<span class="t" style='left:154px;top:386px;font-size:12.5px;line-height:18px;color:#000000;transform:translate(0.84px,0.00px) scaleX(1.2262);transform-origin:0 0;'>Utilities</span>
<span class="t" style='left:154px;top:406px;font-size:12.5px;line-height:18px;color:#000000;transform:translate(0.84px,0.00px) scaleX(1.2262);transform-origin:0 0;'>Utilities</span>
<span class="t" style='left:155px;top:426px;font-size:12.5px;line-height:18px;color:#000000;transform:translate(0.90px,0.00px) scaleX(1.1171);transform-origin:0 0;'>Accommodation</span>
<span class="t" style='left:154px;top:446px;font-size:12.5px;line-height:18px;color:#000000;transform:translate(0.84px,0.00px) scaleX(1.2262);transform-origin:0 0;'>Utilities</span>
<span class="t" style='left:269px;top:246px;font-size:12.5px;line-height:18px;color:#000000;transform:translate(0.40px,0.00px) scaleX(1.0216);transform-origin:0 0;'>$</span>
<span class="t" style='left:278px;top:246px;font-size:12.5px;line-height:18px;color:#000000;transform:translate(0.51px,0.00px) scaleX(1.0216);transform-origin:0 0;'>5,993.21</span>
<span class="t" style='left:343px;top:246px;font-size:12.5px;line-height:18px;color:#000000;transform:translate(0.40px,0.00px) scaleX(1.0216);transform-origin:0 0;'>$</span>
<span class="t" style='left:353px;top:246px;font-size:12.5px;line-height:18px;color:#000000;transform:translate(0.43px,0.00px) scaleX(1.0216);transform-origin:0 0;'>6,113.07</span>
<span class="t" style='left:417px;top:246px;font-size:12.5px;line-height:18px;color:#000000;transform:translate(0.40px,0.00px) scaleX(1.0216);transform-origin:0 0;'>$</span>
<span class="t" style='left:426px;top:246px;font-size:12.5px;line-height:18px;color:#000000;transform:translate(0.51px,0.00px) scaleX(1.0216);transform-origin:0 0;'>6,001.51</span>
<span class="t" style='left:491px;top:246px;font-size:12.5px;line-height:18px;color:#000000;transform:translate(0.40px,0.00px) scaleX(1.0216);transform-origin:0 0;'>$</span>
<span class="t" style='left:500px;top:246px;font-size:12.5px;line-height:18px;color:#000000;transform:translate(0.51px,0.00px) scaleX(1.0216);transform-origin:0 0;'>6,245.07</span>
<span class="t" style='left:565px;top:246px;font-size:12.5px;line-height:18px;color:#000000;transform:translate(0.40px,0.00px) scaleX(1.0216);transform-origin:0 0;'>$</span>
<span class="t" style='left:577px;top:246px;font-size:12.5px;line-height:18px;color:#000000;transform:translate(0.31px,0.00px) scaleX(1.0216);transform-origin:0 0;'>24,352.86</span>
<span class="t" style='left:269px;top:266px;font-size:12.5px;line-height:18px;color:#000000;transform:translate(0.40px,0.00px) scaleX(1.0216);transform-origin:0 0;'>$</span>
<span class="t" style='left:278px;top:266px;font-size:12.5px;line-height:18px;color:#000000;transform:translate(0.36px,0.00px) scaleX(1.0216);transform-origin:0 0;'>4,500.00</span>
<span class="t" style='left:343px;top:266px;font-size:12.5px;line-height:18px;color:#000000;transform:translate(0.40px,0.00px) scaleX(1.0216);transform-origin:0 0;'>$</span>
<span class="t" style='left:352px;top:266px;font-size:12.5px;line-height:18px;color:#000000;transform:translate(0.36px,0.00px) scaleX(1.0216);transform-origin:0 0;'>4,500.00</span>
<span class="t" style='left:417px;top:266px;font-size:12.5px;line-height:18px;color:#000000;transform:translate(0.40px,0.00px) scaleX(1.0216);transform-origin:0 0;'>$</span>
<span class="t" style='left:426px;top:266px;font-size:12.5px;line-height:18px;color:#000000;transform:translate(0.36px,0.00px) scaleX(1.0216);transform-origin:0 0;'>4,500.00</span>
<span class="t" style='left:491px;top:266px;font-size:12.5px;line-height:18px;color:#000000;transform:translate(0.40px,0.00px) scaleX(1.0216);transform-origin:0 0;'>$</span>
<span class="t" style='left:500px;top:266px;font-size:12.5px;line-height:18px;color:#000000;transform:translate(0.36px,0.00px) scaleX(1.0216);transform-origin:0 0;'>4,500.00</span>
<span class="t" style='left:565px;top:266px;font-size:12.5px;line-height:18px;color:#000000;transform:translate(0.40px,0.00px) scaleX(1.0216);transform-origin:0 0;'>$</span>
<span class="t" style='left:577px;top:266px;font-size:12.5px;line-height:18px;color:#000000;transform:translate(0.26px,0.00px) scaleX(1.0216);transform-origin:0 0;'>18,000.00</span>
<span class="t" style='left:269px;top:286px;font-size:12.5px;line-height:18px;color:#000000;transform:translate(0.40px,0.00px) scaleX(1.0216);transform-origin:0 0;'>$</span>
<span class="t" style='left:278px;top:286px;font-size:12.5px;line-height:18px;color:#000000;transform:translate(0.41px,0.00px) scaleX(1.0216);transform-origin:0 0;'>2,900.26</span>
<span class="t" style='left:343px;top:286px;font-size:12.5px;line-height:18px;color:#000000;transform:translate(0.40px,0.00px) scaleX(1.0216);transform-origin:0 0;'>$</span>
<span class="t" style='left:352px;top:286px;font-size:12.5px;line-height:18px;color:#000000;transform:translate(0.51px,0.00px) scaleX(1.0216);transform-origin:0 0;'>2,958.27</span>
<span class="t" style='left:417px;top:286px;font-size:12.5px;line-height:18px;color:#000000;transform:translate(0.40px,0.00px) scaleX(1.0216);transform-origin:0 0;'>$</span>
<span class="t" style='left:426px;top:286px;font-size:12.5px;line-height:18px;color:#000000;transform:translate(0.41px,0.00px) scaleX(1.0216);transform-origin:0 0;'>2,145.95</span>
<span class="t" style='left:491px;top:286px;font-size:12.5px;line-height:18px;color:#000000;transform:translate(0.40px,0.00px) scaleX(1.0216);transform-origin:0 0;'>$</span>
<span class="t" style='left:500px;top:286px;font-size:12.5px;line-height:18px;color:#000000;transform:translate(0.26px,0.00px) scaleX(1.0216);transform-origin:0 0;'>2,953.54</span>
<span class="t" style='left:565px;top:286px;font-size:12.5px;line-height:18px;color:#000000;transform:translate(0.40px,0.00px) scaleX(1.0216);transform-origin:0 0;'>$</span>
<span class="t" style='left:577px;top:286px;font-size:12.5px;line-height:18px;color:#000000;transform:translate(0.41px,0.00px) scaleX(1.0216);transform-origin:0 0;'>10,958.02</span>
<span class="t" style='left:269px;top:326px;font-size:12.5px;line-height:18px;color:#000000;transform:translate(0.40px,0.00px) scaleX(1.0216);transform-origin:0 0;'>$</span>
<span class="t" style='left:288px;top:326px;font-size:12.5px;line-height:18px;color:#000000;transform:translate(0.98px,0.00px) scaleX(1.0216);transform-origin:0 0;'>772.50</span>
<span class="t" style='left:343px;top:326px;font-size:12.5px;line-height:18px;color:#000000;transform:translate(0.40px,0.00px) scaleX(1.0216);transform-origin:0 0;'>$</span>
<span class="t" style='left:362px;top:326px;font-size:12.5px;line-height:18px;color:#000000;transform:translate(0.88px,0.00px) scaleX(1.0216);transform-origin:0 0;'>822.54</span>
<span class="t" style='left:417px;top:326px;font-size:12.5px;line-height:18px;color:#000000;transform:translate(0.40px,0.00px) scaleX(1.0216);transform-origin:0 0;'>$</span>
<span class="t" style='left:437px;top:326px;font-size:12.5px;line-height:18px;color:#000000;transform:translate(0.03px,0.00px) scaleX(1.0216);transform-origin:0 0;'>726.26</span>
<span class="t" style='left:491px;top:326px;font-size:12.5px;line-height:18px;color:#000000;transform:translate(0.40px,0.00px) scaleX(1.0216);transform-origin:0 0;'>$</span>
<span class="t" style='left:511px;top:326px;font-size:12.5px;line-height:18px;color:#000000;transform:translate(0.03px,0.00px) scaleX(1.0216);transform-origin:0 0;'>821.15</span>
<span class="t" style='left:565px;top:326px;font-size:12.5px;line-height:18px;color:#000000;transform:translate(0.40px,0.00px) scaleX(1.0216);transform-origin:0 0;'>$</span>
<span class="t" style='left:584px;top:326px;font-size:12.5px;line-height:18px;color:#000000;transform:translate(0.41px,0.00px) scaleX(1.0216);transform-origin:0 0;'>3,142.45</span>
<span class="t" style='left:269px;top:346px;font-size:12.5px;line-height:18px;color:#000000;transform:translate(0.40px,0.00px) scaleX(1.0216);transform-origin:0 0;'>$</span>
<span class="t" style='left:288px;top:346px;font-size:12.5px;line-height:18px;color:#000000;transform:translate(0.98px,0.00px) scaleX(1.0216);transform-origin:0 0;'>150.00</span>
<span class="t" style='left:343px;top:346px;font-size:12.5px;line-height:18px;color:#000000;transform:translate(0.40px,0.00px) scaleX(1.0216);transform-origin:0 0;'>$</span>
<span class="t" style='left:352px;top:346px;font-size:12.5px;line-height:18px;color:#000000;transform:translate(0.36px,0.00px) scaleX(1.0216);transform-origin:0 0;'>1,102.60</span>
<span class="t" style='left:417px;top:346px;font-size:12.5px;line-height:18px;color:#000000;transform:translate(0.40px,0.00px) scaleX(1.0216);transform-origin:0 0;'>$</span>
<span class="t" style='left:426px;top:346px;font-size:12.5px;line-height:18px;color:#000000;transform:translate(0.51px,0.00px) scaleX(1.0216);transform-origin:0 0;'>1,495.27</span>
<span class="t" style='left:491px;top:346px;font-size:12.5px;line-height:18px;color:#000000;transform:translate(0.40px,0.00px) scaleX(1.0216);transform-origin:0 0;'>$</span>
<span class="t" style='left:531px;top:346px;font-size:12.5px;line-height:18px;color:#000000;transform:translate(0.35px,0.00px) scaleX(1.0216);transform-origin:0 0;'>-</span>
<span class="t" style='left:565px;top:346px;font-size:12.5px;line-height:18px;color:#000000;transform:translate(0.40px,0.00px) scaleX(1.0216);transform-origin:0 0;'>$</span>
<span class="t" style='left:584px;top:346px;font-size:12.5px;line-height:18px;color:#000000;transform:translate(0.51px,0.00px) scaleX(1.0216);transform-origin:0 0;'>2,747.87</span>
<span class="t" style='left:269px;top:366px;font-size:12.5px;line-height:18px;color:#000000;transform:translate(0.40px,0.00px) scaleX(1.0216);transform-origin:0 0;'>$</span>
<span class="t" style='left:289px;top:366px;font-size:12.5px;line-height:18px;color:#000000;transform:translate(0.03px,0.00px) scaleX(1.0216);transform-origin:0 0;'>622.35</span>
<span class="t" style='left:343px;top:366px;font-size:12.5px;line-height:18px;color:#000000;transform:translate(0.40px,0.00px) scaleX(1.0216);transform-origin:0 0;'>$</span>
<span class="t" style='left:362px;top:366px;font-size:12.5px;line-height:18px;color:#000000;transform:translate(0.98px,0.00px) scaleX(1.0216);transform-origin:0 0;'>634.80</span>
<span class="t" style='left:417px;top:366px;font-size:12.5px;line-height:18px;color:#000000;transform:translate(0.40px,0.00px) scaleX(1.0216);transform-origin:0 0;'>$</span>
<span class="t" style='left:437px;top:366px;font-size:12.5px;line-height:18px;color:#000000;transform:translate(0.14px,0.00px) scaleX(1.0216);transform-origin:0 0;'>652.77</span>
<span class="t" style='left:491px;top:366px;font-size:12.5px;line-height:18px;color:#000000;transform:translate(0.40px,0.00px) scaleX(1.0216);transform-origin:0 0;'>$</span>
<span class="t" style='left:512px;top:366px;font-size:12.5px;line-height:18px;color:#000000;transform:translate(0.11px,0.00px) scaleX(1.0216);transform-origin:0 0;'>621.11</span>
<span class="t" style='left:565px;top:366px;font-size:12.5px;line-height:18px;color:#000000;transform:translate(0.40px,0.00px) scaleX(1.0216);transform-origin:0 0;'>$</span>
<span class="t" style='left:584px;top:366px;font-size:12.5px;line-height:18px;color:#000000;transform:translate(0.41px,0.00px) scaleX(1.0216);transform-origin:0 0;'>2,531.03</span>
<span class="t" style='left:269px;top:386px;font-size:12.5px;line-height:18px;color:#000000;transform:translate(0.40px,0.00px) scaleX(1.0216);transform-origin:0 0;'>$</span>
<span class="t" style='left:289px;top:386px;font-size:12.5px;line-height:18px;color:#000000;transform:translate(0.03px,0.00px) scaleX(1.0216);transform-origin:0 0;'>552.25</span>
<span class="t" style='left:343px;top:386px;font-size:12.5px;line-height:18px;color:#000000;transform:translate(0.40px,0.00px) scaleX(1.0216);transform-origin:0 0;'>$</span>
<span class="t" style='left:362px;top:386px;font-size:12.5px;line-height:18px;color:#000000;transform:translate(0.98px,0.00px) scaleX(1.0216);transform-origin:0 0;'>563.30</span>
<span class="t" style='left:417px;top:386px;font-size:12.5px;line-height:18px;color:#000000;transform:translate(0.40px,0.00px) scaleX(1.0216);transform-origin:0 0;'>$</span>
<span class="t" style='left:437px;top:386px;font-size:12.5px;line-height:18px;color:#000000;transform:translate(0.03px,0.00px) scaleX(1.0216);transform-origin:0 0;'>555.25</span>
<span class="t" style='left:491px;top:386px;font-size:12.5px;line-height:18px;color:#000000;transform:translate(0.40px,0.00px) scaleX(1.0216);transform-origin:0 0;'>$</span>
<span class="t" style='left:511px;top:386px;font-size:12.5px;line-height:18px;color:#000000;transform:translate(0.03px,0.00px) scaleX(1.0216);transform-origin:0 0;'>523.65</span>
<span class="t" style='left:565px;top:386px;font-size:12.5px;line-height:18px;color:#000000;transform:translate(0.40px,0.00px) scaleX(1.0216);transform-origin:0 0;'>$</span>
<span class="t" style='left:584px;top:386px;font-size:12.5px;line-height:18px;color:#000000;transform:translate(0.41px,0.00px) scaleX(1.0216);transform-origin:0 0;'>2,194.45</span>
<span class="t" style='left:269px;top:406px;font-size:12.5px;line-height:18px;color:#000000;transform:translate(0.40px,0.00px) scaleX(1.0216);transform-origin:0 0;'>$</span>
<span class="t" style='left:288px;top:406px;font-size:12.5px;line-height:18px;color:#000000;transform:translate(0.98px,0.00px) scaleX(1.0216);transform-origin:0 0;'>360.00</span>
<span class="t" style='left:343px;top:406px;font-size:12.5px;line-height:18px;color:#000000;transform:translate(0.40px,0.00px) scaleX(1.0216);transform-origin:0 0;'>$</span>
<span class="t" style='left:362px;top:406px;font-size:12.5px;line-height:18px;color:#000000;transform:translate(0.98px,0.00px) scaleX(1.0216);transform-origin:0 0;'>367.20</span>
<span class="t" style='left:417px;top:406px;font-size:12.5px;line-height:18px;color:#000000;transform:translate(0.40px,0.00px) scaleX(1.0216);transform-origin:0 0;'>$</span>
<span class="t" style='left:436px;top:406px;font-size:12.5px;line-height:18px;color:#000000;transform:translate(0.98px,0.00px) scaleX(1.0216);transform-origin:0 0;'>360.00</span>
<span class="t" style='left:491px;top:406px;font-size:12.5px;line-height:18px;color:#000000;transform:translate(0.40px,0.00px) scaleX(1.0216);transform-origin:0 0;'>$</span>
<span class="t" style='left:510px;top:406px;font-size:12.5px;line-height:18px;color:#000000;transform:translate(0.98px,0.00px) scaleX(1.0216);transform-origin:0 0;'>360.00</span>
<span class="t" style='left:565px;top:406px;font-size:12.5px;line-height:18px;color:#000000;transform:translate(0.40px,0.00px) scaleX(1.0216);transform-origin:0 0;'>$</span>
<span class="t" style='left:584px;top:406px;font-size:12.5px;line-height:18px;color:#000000;transform:translate(0.36px,0.00px) scaleX(1.0216);transform-origin:0 0;'>1,447.20</span>
<span class="t" style='left:269px;top:426px;font-size:12.5px;line-height:18px;color:#000000;transform:translate(0.40px,0.00px) scaleX(1.0216);transform-origin:0 0;'>$</span>
<span class="t" style='left:288px;top:426px;font-size:12.5px;line-height:18px;color:#000000;transform:translate(0.98px,0.00px) scaleX(1.0216);transform-origin:0 0;'>187.00</span>
<span class="t" style='left:343px;top:426px;font-size:12.5px;line-height:18px;color:#000000;transform:translate(0.40px,0.00px) scaleX(1.0216);transform-origin:0 0;'>$</span>
<span class="t" style='left:362px;top:426px;font-size:12.5px;line-height:18px;color:#000000;transform:translate(0.98px,0.00px) scaleX(1.0216);transform-origin:0 0;'>187.00</span>
<span class="t" style='left:417px;top:426px;font-size:12.5px;line-height:18px;color:#000000;transform:translate(0.40px,0.00px) scaleX(1.0216);transform-origin:0 0;'>$</span>
<span class="t" style='left:436px;top:426px;font-size:12.5px;line-height:18px;color:#000000;transform:translate(0.98px,0.00px) scaleX(1.0216);transform-origin:0 0;'>187.00</span>
<span class="t" style='left:491px;top:426px;font-size:12.5px;line-height:18px;color:#000000;transform:translate(0.40px,0.00px) scaleX(1.0216);transform-origin:0 0;'>$</span>
<span class="t" style='left:510px;top:426px;font-size:12.5px;line-height:18px;color:#000000;transform:translate(0.98px,0.00px) scaleX(1.0216);transform-origin:0 0;'>187.00</span>
<span class="t" style='left:565px;top:426px;font-size:12.5px;line-height:18px;color:#000000;transform:translate(0.40px,0.00px) scaleX(1.0216);transform-origin:0 0;'>$</span>
<span class="t" style='left:594px;top:426px;font-size:12.5px;line-height:18px;color:#000000;transform:translate(0.98px,0.00px) scaleX(1.0216);transform-origin:0 0;'>748.00</span>
<span class="t" style='left:269px;top:446px;font-size:12.5px;line-height:18px;color:#000000;transform:translate(0.40px,0.00px) scaleX(1.0216);transform-origin:0 0;'>$</span>
<span class="t" style='left:289px;top:446px;font-size:12.5px;line-height:18px;color:#000000;transform:translate(0.14px,0.00px) scaleX(1.0216);transform-origin:0 0;'>132.01</span>
<span class="t" style='left:343px;top:446px;font-size:12.5px;line-height:18px;color:#000000;transform:translate(0.40px,0.00px) scaleX(1.0216);transform-origin:0 0;'>$</span>
<span class="t" style='left:363px;top:446px;font-size:12.5px;line-height:18px;color:#000000;transform:translate(0.95px,0.00px) scaleX(1.0216);transform-origin:0 0;'>110.00</span>
<span class="t" style='left:417px;top:446px;font-size:12.5px;line-height:18px;color:#000000;transform:translate(0.40px,0.00px) scaleX(1.0216);transform-origin:0 0;'>$</span>
<span class="t" style='left:444px;top:446px;font-size:12.5px;line-height:18px;color:#000000;transform:translate(0.13px,0.00px) scaleX(1.0216);transform-origin:0 0;'>90.03</span>
<span class="t" style='left:491px;top:446px;font-size:12.5px;line-height:18px;color:#000000;transform:translate(0.40px,0.00px) scaleX(1.0216);transform-origin:0 0;'>$</span>
<span class="t" style='left:511px;top:446px;font-size:12.5px;line-height:18px;color:#000000;transform:translate(0.14px,0.00px) scaleX(1.0216);transform-origin:0 0;'>121.17</span>
<span class="t" style='left:565px;top:446px;font-size:12.5px;line-height:18px;color:#000000;transform:translate(0.40px,0.00px) scaleX(1.0216);transform-origin:0 0;'>$</span>
<span class="t" style='left:595px;top:446px;font-size:12.5px;line-height:18px;color:#000000;transform:translate(0.14px,0.00px) scaleX(1.0216);transform-origin:0 0;'>453.21</span>
<svg style="left:190px;top:220px" width="22" height="22" viewBox="190 220 22 22">
<!-- ===== cursor ===== -->
<path d="M198 224H202.2V228H206.3V232.2H202.2V236H198V232.2H194V228H198Z" fill="#000" stroke="#000" stroke-width="2" stroke-linejoin="miter" transform="translate(0.7,0.7)"/>
<path d="M198 224H202.2V228H206.3V232.2H202.2V236H198V232.2H194V228H198Z" fill="#000" stroke="#000" stroke-width="2" stroke-linejoin="miter"/>
<path d="M198 224H202.2V228H206.3V232.2H202.2V236H198V232.2H194V228H198Z" fill="#fff"/>
</svg>

  <div id="lborder"></div>
  <div id="bborder"></div>
</div>
</body>
</html>
